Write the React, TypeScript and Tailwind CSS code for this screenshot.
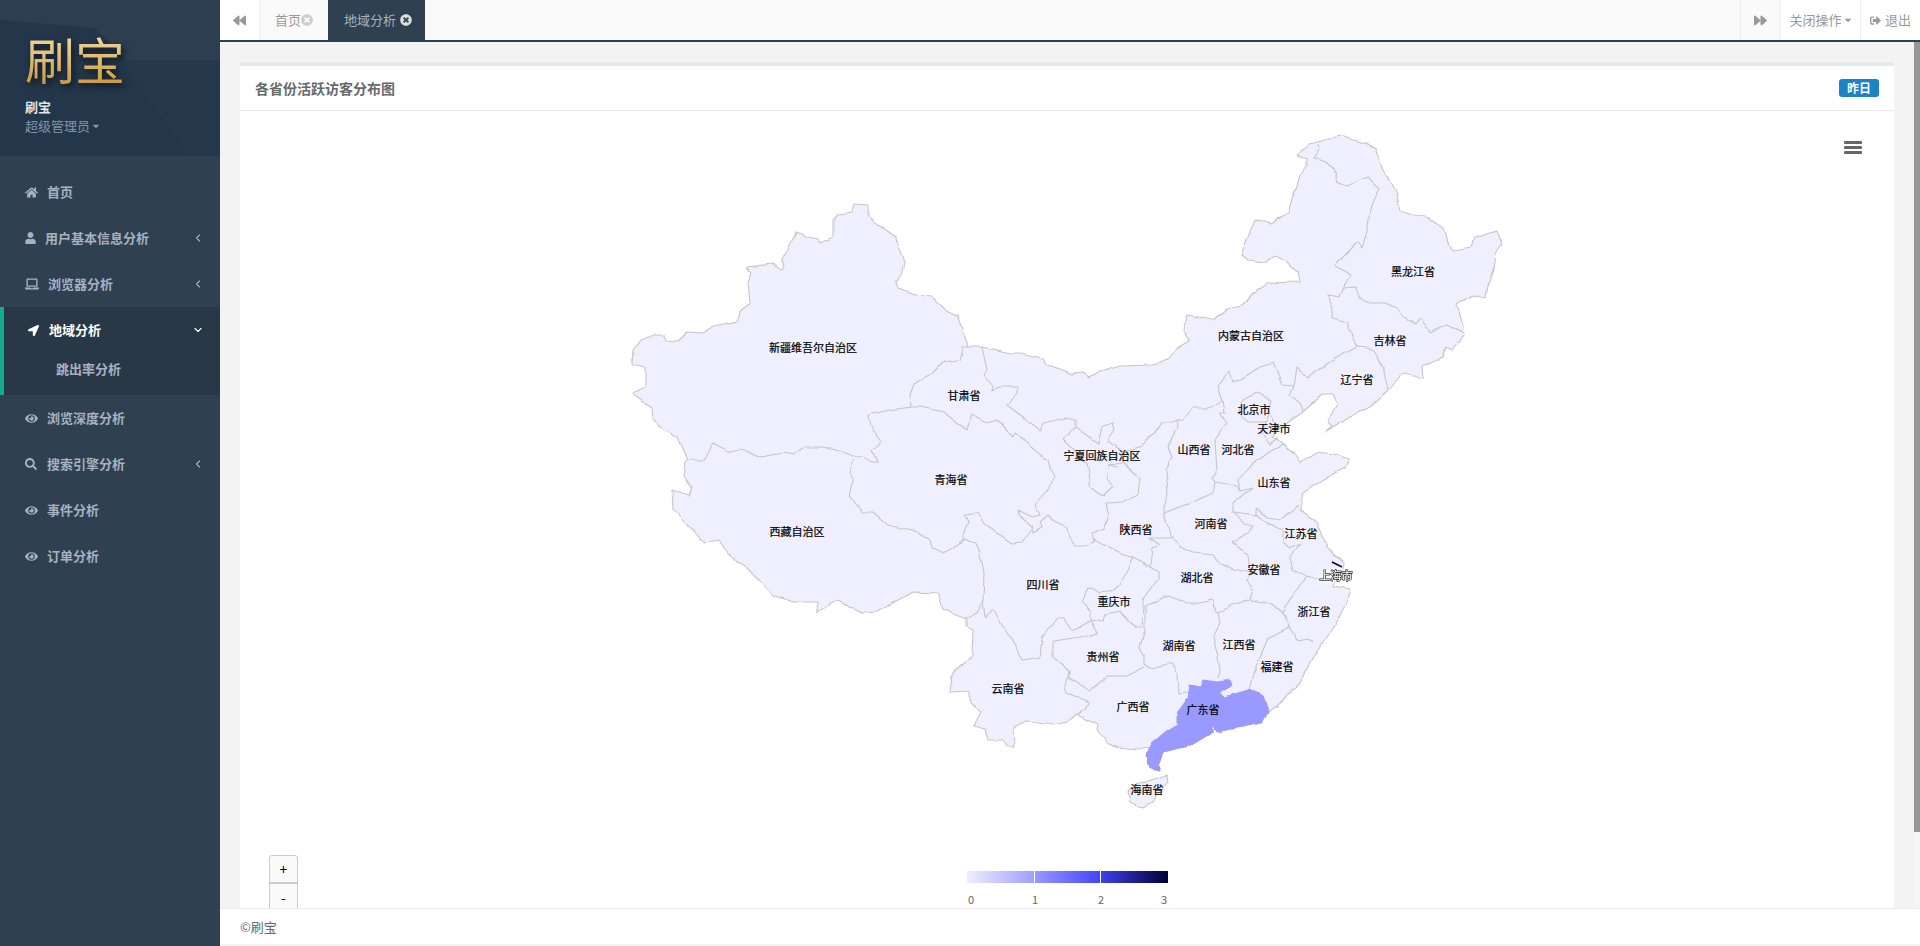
import { ChevronDown, ChevronLeft } from "lucide-react";
import {
  FaBackward,
  FaCaretDown,
  FaEye,
  FaForward,
  FaHome,
  FaLaptop,
  FaLocationArrow,
  FaSearch,
  FaSignOutAlt,
  FaTimesCircle,
  FaUser,
} from "react-icons/fa";

const fontStack = "font-['Noto_Sans_CJK_SC','Liberation_Sans',sans-serif]";

// Sidebar items, gap is the space between icon and text in the reference
const menuTop = [
  { title: "首页", icon: FaHome, iconClass: "w-[13px] h-[13px]", textClass: "ml-[9px]" },
  { title: "用户基本信息分析", icon: FaUser, iconClass: "w-[11px] h-[12px]", textClass: "ml-[9px]", arrow: true },
  { title: "浏览器分析", icon: FaLaptop, iconClass: "w-[14px] h-[14px]", textClass: "ml-[9px]", arrow: true },
];

const menuBottom = [
  { title: "浏览深度分析", icon: FaEye, iconClass: "w-[13px] h-[13px]", textClass: "ml-[9px]" },
  { title: "搜索引擎分析", icon: FaSearch, iconClass: "w-[12px] h-[12px]", textClass: "ml-[10px]", arrow: true },
  { title: "事件分析", icon: FaEye, iconClass: "w-[13px] h-[13px]", textClass: "ml-[9px]" },
  { title: "订单分析", icon: FaEye, iconClass: "w-[13px] h-[13px]", textClass: "ml-[9px]" },
];

// Map data, in page pixels (the svg viewBox starts at the chart's corner)
const mainland =
  "632,365 633,350 640,340 655,335 665,335 667,340 677,341 687,332 703,333 712,327 738,322 740,310 750,303 748,283 752,272 746,267 773,264 782,270 784,265 781,262 797,232 807,237 818,239 820,243 833,237 833,220 838,214 852,212 854,203 868,204 868,215 877,226 887,230 897,237 898,247 904,260 902,273 896,282 898,289 915,295 932,297 948,312 957,315 960,323 968,347 982,347 1012,353 1020,353 1043,358 1048,365 1072,374 1083,373 1090,378 1100,372 1120,366 1153,365 1168,358 1178,347 1190,340 1183,330 1188,315 1213,320 1227,308 1243,305 1257,290 1267,283 1300,282 1298,272 1288,262 1275,255 1265,262 1247,260 1241,255 1245,245 1255,219 1270,224 1288,213 1292,200 1300,177 1307,167 1307,158 1298,155 1308,143 1340,136 1353,140 1367,143 1375,150 1383,170 1397,195 1400,210 1415,215 1428,218 1443,228 1448,245 1452,250 1472,247 1475,238 1497,231 1502,243 1495,253 1493,270 1487,287 1485,298 1472,295 1457,305 1463,327 1464,335 1453,350 1445,347 1442,357 1422,367 1423,377 1403,373 1388,390 1370,407 1350,417 1333,428 1325,433 1332,427 1327,422 1338,403 1333,395 1322,395 1303,412 1280,428 1273,437 1283,445 1293,453 1300,463 1317,453 1333,455 1348,460 1345,468 1323,480 1303,493 1300,510 1317,522 1327,547 1343,562 1342,572 1332,587 1350,590 1347,600 1340,617 1327,637 1313,657 1300,683 1283,700 1268,712 1262,723 1237,728 1217,732 1213,725 1213,733 1193,745 1163,752 1158,765 1160,770 1150,768 1147,757 1150,747 1138,750 1117,748 1107,743 1097,730 1098,725 1077,715 1067,722 1055,725 1028,722 1013,728 1014,747 1007,747 1003,740 988,740 985,730 973,727 980,712 970,703 970,692 950,693 952,675 962,665 972,657 973,630 967,627 967,618 942,608 937,593 912,592 877,612 863,613 837,600 818,613 817,602 793,602 773,595 762,583 748,568 738,563 718,540 705,543 687,525 674,510 673,490 688,495 691,487 683,475 685,463 688,460 678,437 660,427 653,420 652,407 633,393 645,387 645,368";

const hainan = "1135,785 1167,775 1168,782 1158,793 1153,802 1143,808 1130,802 1128,792";

const guangdong =
  "1190,685 1200,687 1203,680 1217,682 1230,680 1232,685 1220,693 1225,697 1248,690 1263,695 1268,712 1262,723 1237,728 1217,732 1213,725 1213,733 1193,745 1163,752 1158,765 1160,770 1150,768 1147,757 1150,745 1165,732 1177,725 1177,713 1188,698";

const borders = [
  // xinjiang / gansu, qinghai, tibet
  "968,347 963,347 960,361 943,363 932,373 914,384 910,395 911,407 890,410 868,415 870,427 882,443 872,450 877,462 857,457 840,450 820,448 803,448 793,455 783,453 760,457 750,452 740,450 730,452 713,443 702,460 688,460",
  // tibet / qinghai / sichuan
  "855,459 849,472 853,480 850,497 862,513 873,513 887,525 918,532 930,540 932,548 943,553 953,548 965,538 975,543 982,562 984,573 983,600 977,613 967,618",
  // qinghai / gansu
  "911,407 920,407 943,412 967,430 972,415 987,423 997,420 1013,437 1015,433 1038,453 1048,460 1053,478 1050,488 1035,505 1040,515 1032,517 1018,510 1020,517 1032,528 1022,542 1012,543 997,533 985,525 977,513 965,515 968,523 963,535 965,538",
  // inner mongolia / gansu
  "982,347 987,370 984,375 993,385 992,391 1000,387 1018,387 1018,393 1007,405 1027,420 1040,430 1043,423 1065,418 1075,420 1075,427 1063,440 1087,463 1090,480 1090,487 1103,497 1113,487 1107,480 1108,465 1118,467",
  // ningxia
  "1075,427 1098,443 1102,427 1113,423 1115,430 1108,440 1120,450 1132,450 1143,447 1147,440 1163,423 1173,423 1177,421 1183,420 1193,408 1207,408 1223,402 1218,387 1230,372 1233,382 1243,378 1260,367 1273,363 1282,385 1294,386 1297,367 1307,377 1338,357 1357,347 1355,343 1347,322 1332,318 1333,308 1327,295 1340,297 1343,288 1350,275 1335,265 1358,242 1362,248 1368,228 1370,208 1378,188 1367,177 1347,186 1337,182 1333,168 1327,162 1313,158 1320,148 1317,143",
  "1108,465 1123,463 1140,478 1138,495 1123,502 1105,503 1108,515 1103,528 1093,533 1095,542 1087,545 1075,545 1070,537 1068,528 1055,522 1048,515 1040,522 1042,528 1033,533 1032,528",
  // heilongjiang / jilin / liaoning
  "1343,288 1357,287 1358,298 1367,302 1382,302 1398,308 1402,315 1415,325 1420,318 1430,333 1447,325 1463,333",
  "1357,347 1367,348 1373,350 1383,367 1388,390",
  "1294,386 1290,395 1300,403 1303,412",
  // hebei, beijing, tianjin
  "1223,402 1225,413 1220,413 1227,422 1215,440 1217,473 1212,478 1215,482 1237,486 1240,490 1252,487 1233,503 1233,512 1243,525 1253,527 1248,533 1233,543 1248,555 1250,573",
  "1257,393 1270,400 1270,413 1265,422 1247,422 1240,413 1242,400 1257,393",
  "1270,413 1280,428",
  "1265,422 1262,433 1270,445 1278,437",
  "1240,490 1238,480 1250,467 1273,450 1283,445",
  // shanxi / shaanxi / henan
  "1177,421 1178,427 1168,447 1172,458 1166,470 1168,493 1163,508 1163,513 1193,502 1213,493 1215,482",
  "1163,513 1173,537 1180,547 1193,553 1215,555 1220,565 1238,570 1250,573 1247,580 1253,590 1250,600 1263,602 1273,603 1283,612 1293,593 1307,577 1320,580 1332,577",
  // shandong / jiangsu / anhui
  "1233,512 1257,515 1270,525 1283,530 1283,543 1290,548 1302,543 1290,557 1293,570 1307,577",
  "1257,515 1257,508 1267,518 1280,520 1298,505",
  // zhejiang / fujian / jiangxi
  "1250,600 1233,605 1218,613 1215,612 1212,600 1200,603 1187,603 1177,598 1163,597 1145,607 1145,630 1140,648 1145,657 1145,665 1150,668 1173,663 1177,673 1178,693 1188,692",
  "1218,613 1220,623 1213,638 1218,657 1220,670 1218,678",
  "1283,612 1290,628 1268,638 1263,650 1252,678 1249,690",
  "1290,628 1298,642 1308,640 1313,643",
  // shaanxi / sichuan / hubei / chongqing
  "1095,540 1125,555 1133,558 1150,567 1158,572 1158,580 1143,600 1143,607",
  "1150,567 1152,548 1160,545 1150,538 1173,538",
  "1133,558 1120,585 1115,590 1100,592 1090,587 1082,602 1090,613 1090,620 1102,622 1105,615 1120,612 1137,627 1142,627 1143,607",
  // guizhou / yunnan / guangxi
  "1145,668 1127,677 1107,677 1090,690 1068,678 1068,670 1053,657 1053,642 1080,638 1097,633 1090,620 1073,630 1065,618 1057,618 1042,638 1040,657 1023,660 1010,637 992,610 985,618 983,600",
  "1068,670 1065,687 1067,693 1090,702 1088,708 1078,715",
];

const labels = [
  { name: "新疆维吾尔自治区", x: 813, y: 347 },
  { name: "甘肃省", x: 964, y: 395 },
  { name: "黑龙江省", x: 1413, y: 271 },
  { name: "内蒙古自治区", x: 1251, y: 335 },
  { name: "吉林省", x: 1390, y: 340 },
  { name: "辽宁省", x: 1357, y: 379 },
  { name: "北京市", x: 1254, y: 409 },
  { name: "天津市", x: 1274, y: 428 },
  { name: "西藏自治区", x: 797, y: 531 },
  { name: "青海省", x: 951, y: 479 },
  { name: "四川省", x: 1043, y: 584 },
  { name: "重庆市", x: 1114, y: 601 },
  { name: "贵州省", x: 1103, y: 656 },
  { name: "云南省", x: 1008, y: 688 },
  { name: "宁夏回族自治区", x: 1102, y: 455 },
  { name: "山西省", x: 1194, y: 449 },
  { name: "河北省", x: 1238, y: 449 },
  { name: "山东省", x: 1274, y: 482 },
  { name: "陕西省", x: 1136, y: 529 },
  { name: "河南省", x: 1211, y: 523 },
  { name: "江苏省", x: 1301, y: 533 },
  { name: "安徽省", x: 1264, y: 569 },
  { name: "湖北省", x: 1197, y: 577 },
  { name: "浙江省", x: 1314, y: 611 },
  { name: "湖南省", x: 1179, y: 645 },
  { name: "江西省", x: 1239, y: 644 },
  { name: "福建省", x: 1277, y: 666 },
  { name: "广东省", x: 1203, y: 709 },
  { name: "广西省", x: 1133, y: 706 },
  { name: "海南省", x: 1147, y: 789 },
];

function ChinaMap() {
  return (
    <svg viewBox="240 111 1654 800" className={`block w-[1654px] h-[800px] ${fontStack}`}>
      <defs>
        <linearGradient id="legendA">
          <stop offset="0" stopColor="#eeeeff" />
          <stop offset="1" stopColor="#9f9fff" />
        </linearGradient>
        <linearGradient id="legendB">
          <stop offset="0" stopColor="#9999ff" />
          <stop offset="1" stopColor="#4444ff" />
        </linearGradient>
        <linearGradient id="legendC">
          <stop offset="0" stopColor="#3f3ff0" />
          <stop offset="1" stopColor="#000033" />
        </linearGradient>
        {/* borders in the picture are wobbly coastline data, not straight segments */}
        <filter id="rough" filterUnits="userSpaceOnUse" x="600" y="120" width="940" height="700">
          <feTurbulence type="fractalNoise" baseFrequency="0.06" numOctaves="2" seed="4" />
          <feDisplacementMap in="SourceGraphic" scale="5" xChannelSelector="R" yChannelSelector="G" />
        </filter>
      </defs>

      <g filter="url(#rough)">
        <g fill="#efefff" stroke="#c6c6c6" strokeWidth="1.1" strokeLinejoin="round">
          <polygon points={mainland} />
          <polygon points={hainan} />
        </g>
        <g fill="none" stroke="#c6c6c6" strokeWidth="1.1" strokeLinejoin="round">
          {borders.map((points) => (
            <polyline key={points} points={points} />
          ))}
        </g>
        <polygon points={guangdong} fill="#9999ff" stroke="#9999ff" strokeWidth="1" />
      </g>

      {/* shanghai, highlighted */}
      <path d="M1332 562L1342 567" stroke="#000033" strokeWidth="1.5" />
      <path d="M1331 579L1336 577" stroke="#000033" strokeWidth="2" />

      <g fontSize="11" textAnchor="middle" dominantBaseline="central" fill="#000" stroke="#000" strokeWidth="0.2">
        {labels.map((l) => (
          <text key={l.name} x={l.x} y={l.y}>
            {l.name}
          </text>
        ))}
        <g className="[filter:drop-shadow(0_0_2px_#fff)_drop-shadow(0_0_1px_#fff)]">
          <text x={1336} y={575} fill="#fff" stroke="#333" strokeWidth="1.4" className="[paint-order:stroke]">
            上海市
          </text>
        </g>
      </g>

      {/* toolbox */}
      <g fill="#666">
        <rect x="1844" y="141" width="18" height="3" rx="1" />
        <rect x="1844" y="146" width="18" height="3" rx="1" />
        <rect x="1844" y="151" width="18" height="3" rx="1" />
      </g>

      {/* visual map */}
      <rect x="967" y="871" width="67" height="12" fill="url(#legendA)" />
      <rect x="1035" y="871" width="65" height="12" fill="url(#legendB)" />
      <rect x="1101" y="871" width="67" height="12" fill="url(#legendC)" />
      <g fontSize="11" textAnchor="middle" dominantBaseline="central" fill="#666">
        <text x="971" y="899">0</text>
        <text x="1035" y="899">1</text>
        <text x="1101" y="899">2</text>
        <text x="1164" y="899">3</text>
      </g>
    </svg>
  );
}

function Profile() {
  return (
    <div className="relative h-[156px] shrink-0 overflow-hidden bg-[#2c3e50] pl-[25px] pt-[31px]">
      <svg viewBox="0 0 220 156" className="absolute inset-0 w-[220px] h-[156px]">
        <polygon points="0,20 95,28 220,156 0,156" fill="#24364a" />
        <polygon points="120,60 220,60 220,156 190,156" fill="#26384b" />
      </svg>
      <div className="relative">
        <div className="h-[54px] w-fit bg-gradient-to-b from-[#f3dca6] via-[#e0bd72] to-[#c99a3f] bg-clip-text text-[50px] leading-[54px] text-transparent [filter:drop-shadow(2px_3px_3px_rgba(0,0,0,0.65))]">
          刷宝
        </div>
        <div className="mt-[14px] text-[13px] leading-[16px] font-bold text-[#dfe4ed]">刷宝</div>
        <div className="mt-[2px] flex items-center text-[13px] leading-[18px] text-[#8095a8]">
          超级管理员
          <FaCaretDown className="ml-[2px] h-[10px] w-[8px]" />
        </div>
      </div>
    </div>
  );
}

function MenuRow({ item }: { item: (typeof menuBottom)[number] & { arrow?: boolean } }) {
  return (
    <div className="flex h-[46px] items-center pl-[25px] pr-[16px] text-[13px] font-bold text-[#a7b1c2]">
      <item.icon className={item.iconClass} />
      <span className={item.textClass}>{item.title}</span>
      {item.arrow && <ChevronLeft className="ml-auto h-[12px] w-[12px]" strokeWidth={2.25} />}
    </div>
  );
}

function Sidebar() {
  return (
    <aside className="flex h-full w-[220px] shrink-0 flex-col bg-[#2f4050]">
      <Profile />
      <nav className="pt-[13px]">
        {menuTop.map((item) => (
          <MenuRow key={item.title} item={item} />
        ))}
        <div className="h-[88px] border-l-4 border-[#19aa8d] bg-[#293846]">
          <div className="flex h-[46px] items-center pl-[24px] pr-[16px] text-[13px] font-bold text-white">
            <FaLocationArrow className="h-[11px] w-[11px]" />
            <span className="ml-[10px]">地域分析</span>
            <ChevronDown className="ml-auto h-[12px] w-[12px]" strokeWidth={2.25} />
          </div>
          <div className="mt-[6px] pl-[52px] text-[13px] leading-[20px] font-bold text-[#a7b1c2]">跳出率分析</div>
        </div>
        {menuBottom.map((item) => (
          <MenuRow key={item.title} item={item} />
        ))}
      </nav>
    </aside>
  );
}

function TopTabs() {
  return (
    <header className="flex h-[42px] shrink-0 border-b-2 border-[#2f4050] bg-[#fafafa] text-[13px] text-[#999]">
      <button className="flex w-[40px] items-center justify-center border-r border-[#eeeeee] bg-white">
        <FaBackward className="h-[13px] w-[15px]" />
      </button>
      <div className="flex w-[68px] items-center pl-[15px]">
        首页
        <FaTimesCircle className="h-[12px] w-[12px] text-[#cccccc]" />
      </div>
      <div className="flex w-[97px] items-center bg-[#2f4050] pl-[16px] text-[#a7b1c2]">
        地域分析
        <FaTimesCircle className="ml-[4px] h-[12px] w-[12px] text-[#dddddd]" />
      </div>
      <div className="ml-auto flex w-[40px] items-center justify-center border-l border-[#eeeeee]">
        <FaForward className="h-[13px] w-[15px]" />
      </div>
      <div className="flex w-[80px] items-center justify-center border-l border-[#eeeeee] bg-white">
        关闭操作
        <FaCaretDown className="ml-[2px] h-[10px] w-[8px]" />
      </div>
      <div className="flex w-[60px] items-center border-l border-[#eeeeee] bg-white pl-[9px]">
        <FaSignOutAlt className="mr-[4px] h-[11px] w-[11px]" />
        退出
      </div>
    </header>
  );
}

export default function App() {
  return (
    <div className={`flex h-[946px] w-[1920px] overflow-hidden bg-[#f3f3f4] ${fontStack}`}>
      <Sidebar />
      <main className="flex h-full min-w-0 flex-1 flex-col">
        <TopTabs />
        <div className="flex min-h-0 flex-1">
          <div className="min-w-0 flex-1 overflow-hidden px-5 pt-5">
            <section className="border-t-4 border-[#e7eaec] bg-white">
              <div className="flex h-[45px] items-center justify-between border-b border-[#e7eaec] pl-[15px] pr-[15px]">
                <h5 className="text-[14px] font-bold text-[#676a6c]">各省份活跃访客分布图</h5>
                <span className="rounded-[3px] bg-[#1c84c6] px-[8px] text-[12px] leading-[18px] font-bold text-white">
                  昨日
                </span>
              </div>
              <div className="relative">
                <ChinaMap />
                <div className="absolute left-[29px] top-[744px] w-[29px] overflow-hidden rounded-t-[3px] border border-[#cccccc] bg-[#fafafa] text-center text-[14px] text-black">
                  <div className="h-[28px] border-b-2 border-[#cccccc] leading-[27px]">+</div>
                  <div className="h-[28px] leading-[27px]">-</div>
                </div>
              </div>
            </section>
          </div>
          <div className="w-[6px] shrink-0 bg-[#f6f6f6]">
            <div className="h-[790px] bg-[#969696]" />
          </div>
        </div>
        <footer className="mb-[2px] flex h-[36px] shrink-0 items-center border-t border-[#e7eaec] bg-white pl-5 text-[13px] text-[#676a6c]">
          ©刷宝
        </footer>
      </main>
    </div>
  );
}
